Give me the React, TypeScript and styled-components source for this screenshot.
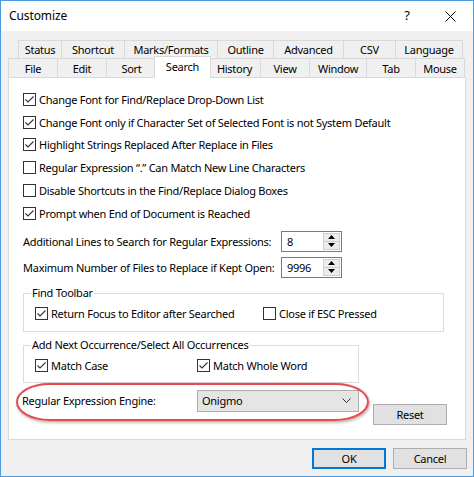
import React from "react";
import styled, { createGlobalStyle } from "styled-components";

const GlobalStyle = createGlobalStyle`
  html, body {
    margin: 0;
    padding: 0;
    background: #ffffff;
  }
  body {
    font-family: "Noto Sans", "Segoe UI", sans-serif;
    font-size: 11px;
    letter-spacing: -0.26px;
    color: #000000;
  }
`;

// tab dividers measured from the dialog
const backTabs = [
  { name: "Status", w: 44 },
  { name: "Shortcut", w: 64 },
  { name: "Marks/Formats", w: 94 },
  { name: "Outline", w: 57 },
  { name: "Advanced", w: 71 },
  { name: "CSV", w: 53 },
  { name: "Language", w: 68 },
];

const frontTabs = [
  { name: "File", w: 50 },
  { name: "Edit", w: 50 },
  { name: "Sort", w: 51 },
  { name: "Search", w: 57, active: true },
  { name: "History", w: 53 },
  { name: "View", w: 50 },
  { name: "Window", w: 58 },
  { name: "Tab", w: 50 },
  { name: "Mouse", w: 50 },
];

const options = [
  { label: "Change Font for Find/Replace Drop-Down List", checked: true },
  { label: "Change Font only if Character Set of Selected Font is not System Default", checked: true },
  { label: "Highlight Strings Replaced After Replace in Files", checked: true },
  { label: "Regular Expression \u201C.\u201D Can Match New Line Characters", checked: false },
  { label: "Disable Shortcuts in the Find/Replace Dialog Boxes", checked: false },
  { label: "Prompt when End of Document is Reached", checked: true },
];

const Window = styled.div`
  width: 474px;
  height: 477px;
  box-sizing: border-box;
  border: 1px solid #4c9be2;
  background: #f0f0f0;
  display: flex;
  flex-direction: column;
  overflow: hidden;
`;

const TitleBar = styled.div`
  height: 30px;
  background: #ffffff;
  display: flex;
  align-items: center;
  padding-left: 8px;
  flex-shrink: 0;
`;

const Title = styled.div`
  flex: 1;
  font-size: 12px;
  letter-spacing: -0.1px;
  padding-bottom: 1px;
`;

const HelpButton = styled.div`
  width: 30px;
  text-align: center;
  font-size: 13px;
  padding-bottom: 2px;
`;

const CloseButton = styled.div`
  width: 45px;
  height: 30px;
  margin-left: 6px;
  display: flex;
  align-items: center;
  justify-content: center;
`;

const Body = styled.div`
  padding: 9px 6px 0 7px;
  display: flex;
  flex-direction: column;
`;

const BackRow = styled.div`
  display: flex;
  height: 18px;
  padding-left: 10px;
`;

const FrontRow = styled.div`
  display: flex;
  height: 19px;
  align-items: flex-end;
`;

const Tab = styled.div<{ $w: number; $active?: boolean }>`
  width: ${(p) => p.$w}px;
  height: ${(p) => (p.$active ? "22px" : "100%")};
  box-sizing: border-box;
  border: 1px solid #d9d9d9;
  border-bottom: none;
  background: ${(p) => (p.$active ? "#ffffff" : "#f0f0f0")};
  display: flex;
  align-items: center;
  justify-content: center;
  white-space: nowrap;
  margin-left: ${(p) => (p.$active ? "-3px" : "-1px")};
  margin-right: ${(p) => (p.$active ? "-2px" : "0")};
  margin-bottom: ${(p) => (p.$active ? "-1px" : "0")};
  padding-bottom: ${(p) => (p.$active ? "2px" : "0")};
  position: ${(p) => (p.$active ? "relative" : "static")};
  z-index: ${(p) => (p.$active ? 2 : "auto")};

  &:first-child {
    margin-left: 0;
  }
`;

const Panel = styled.div`
  width: 458px;
  height: 363px;
  box-sizing: border-box;
  border: 1px solid #d9d9d9;
  background: #ffffff;
  padding: 10px 0 0 14px;
  display: flex;
  flex-direction: column;
`;

const CheckRow = styled.label`
  display: flex;
  align-items: center;
  gap: 3px;
  height: 22.8px;
  white-space: nowrap;
`;

const InlineCheck = styled.label<{ $w?: number }>`
  display: flex;
  align-items: center;
  gap: 3px;
  white-space: nowrap;
  width: ${(p) => (p.$w ? `${p.$w}px` : "auto")};
  flex-shrink: 0;
`;

const Box = styled.span`
  width: 13px;
  height: 13px;
  box-sizing: border-box;
  border: 1px solid #333333;
  background: #ffffff;
  display: flex;
  align-items: center;
  justify-content: center;
  flex-shrink: 0;
`;

const SpinRow = styled.div<{ $top: number }>`
  display: flex;
  align-items: center;
  height: 21px;
  margin-top: ${(p) => p.$top}px;
`;

const SpinLabel = styled.div`
  width: 258px;
  white-space: nowrap;
`;

const SpinBox = styled.div`
  width: 61px;
  height: 21px;
  box-sizing: border-box;
  border: 1px solid #7a7a7a;
  display: flex;
  background: #ffffff;
`;

const SpinValue = styled.div`
  flex: 1;
  padding-left: 5px;
  display: flex;
  align-items: center;
`;

const SpinButtons = styled.div`
  width: 17px;
  margin: 1px 1px 1px 0;
  display: flex;
  flex-direction: column;
`;

const SpinButton = styled.div`
  flex: 1;
  box-sizing: border-box;
  border: 1px solid #cfcfcf;
  background: #ececec;
  display: flex;
  align-items: center;
  justify-content: center;

  & + & {
    border-top: none;
  }
`;

const Group = styled.div<{ $w: number; $h: number; $top: number }>`
  position: relative;
  width: ${(p) => p.$w}px;
  height: ${(p) => p.$h}px;
  margin-top: ${(p) => p.$top}px;
  box-sizing: border-box;
  border: 1px solid #dcdcdc;
  padding: 12px 0 0 11px;
  display: flex;
  align-items: flex-start;
`;

const Caption = styled.span`
  position: absolute;
  top: -9px;
  left: 7px;
  padding: 0 1px;
  background: #ffffff;
  line-height: 16px;
  white-space: nowrap;
`;

const EngineRow = styled.div`
  position: relative;
  display: flex;
  align-items: flex-start;
  margin: 7px 0 0 -1px;
`;

const EngineLabel = styled.div`
  width: 175px;
  line-height: 22px;
  white-space: nowrap;
`;

const Combo = styled.div`
  width: 162px;
  height: 22px;
  box-sizing: border-box;
  border: 1px solid #adadad;
  background: #e5e5e5;
  display: flex;
  align-items: center;
  justify-content: space-between;
  padding: 0 7px 0 4px;
`;

const Button = styled.div<{ $default?: boolean; $top?: number; $left?: number }>`
  width: 74px;
  height: 21px;
  box-sizing: border-box;
  border: 1px solid ${(p) => (p.$default ? "#0078d7" : "#adadad")};
  box-shadow: ${(p) => (p.$default ? "inset 0 0 0 1px #0078d7" : "none")};
  background: #e1e1e1;
  display: flex;
  align-items: center;
  justify-content: center;
  margin-top: ${(p) => p.$top ?? 0}px;
  margin-left: ${(p) => p.$left ?? 0}px;
`;

const Highlight = styled.div`
  position: absolute;
  left: -6px;
  top: -7px;
  width: 353px;
  height: 38px;
  box-sizing: border-box;
  border: 2px solid #e34b50;
  border-radius: 34px / 19px;
  box-shadow: 0 0 1px #e34b50, 1px 2px 3px rgba(0, 0, 0, 0.25);
  pointer-events: none;
`;

const Footer = styled.div`
  display: flex;
  justify-content: flex-end;
  gap: 7px;
  margin-top: 8px;
`;

function Check({ checked }: { checked: boolean }) {
  return (
    <Box>
      {checked && (
        <svg width="11" height="11" viewBox="0 0 11 11">
          <polyline points="1.5,5.5 4,8 9.5,2.5" fill="none" stroke="#333" strokeWidth="1.1" />
        </svg>
      )}
    </Box>
  );
}

function Spin({ value }: { value: string }) {
  return (
    <SpinBox>
      <SpinValue>{value}</SpinValue>
      <SpinButtons>
        <SpinButton>
          <svg width="7" height="4" viewBox="0 0 7 4">
            <polygon points="0,4 7,4 3.5,0" fill="#000" />
          </svg>
        </SpinButton>
        <SpinButton>
          <svg width="7" height="4" viewBox="0 0 7 4">
            <polygon points="0,0 7,0 3.5,4" fill="#000" />
          </svg>
        </SpinButton>
      </SpinButtons>
    </SpinBox>
  );
}

export default function App() {
  return (
    <>
      <GlobalStyle />
      <Window>
        <TitleBar>
          <Title>Customize</Title>
          <HelpButton>?</HelpButton>
          <CloseButton>
            <svg width="11" height="11" viewBox="0 0 11 11">
              <path d="M0.5 0.5 L10.5 10.5 M10.5 0.5 L0.5 10.5" stroke="#000" strokeWidth="1" />
            </svg>
          </CloseButton>
        </TitleBar>
        <Body>
          <BackRow>
            {backTabs.map((t) => (
              <Tab key={t.name} $w={t.w}>
                {t.name}
              </Tab>
            ))}
          </BackRow>
          <FrontRow>
            {frontTabs.map((t) => (
              <Tab key={t.name} $w={t.w} $active={t.active}>
                {t.name}
              </Tab>
            ))}
          </FrontRow>
          <Panel>
            {options.map((o) => (
              <CheckRow key={o.label}>
                <Check checked={o.checked} />
                {o.label}
              </CheckRow>
            ))}
            <SpinRow $top={6}>
              <SpinLabel>Additional Lines to Search for Regular Expressions:</SpinLabel>
              <Spin value="8" />
            </SpinRow>
            <SpinRow $top={5}>
              <SpinLabel>Maximum Number of Files to Replace if Kept Open:</SpinLabel>
              <Spin value="9996" />
            </SpinRow>
            <Group $w={421} $h={39} $top={15}>
              <Caption>Find Toolbar</Caption>
              <InlineCheck $w={228}>
                <Check checked />
                Return Focus to Editor after Searched
              </InlineCheck>
              <InlineCheck>
                <Check checked={false} />
                Close if ESC Pressed
              </InlineCheck>
            </Group>
            <Group $w={336} $h={38} $top={13}>
              <Caption>Add Next Occurrence/Select All Occurrences</Caption>
              <InlineCheck $w={162}>
                <Check checked />
                Match Case
              </InlineCheck>
              <InlineCheck>
                <Check checked />
                Match Whole Word
              </InlineCheck>
            </Group>
            <EngineRow>
              <Highlight />
              <EngineLabel>Regular Expression Engine:</EngineLabel>
              <Combo>
                <span>Onigmo</span>
                <svg width="9" height="5" viewBox="0 0 9 5">
                  <polyline points="0.5,0.5 4.5,4.5 8.5,0.5" fill="none" stroke="#333" strokeWidth="1" />
                </svg>
              </Combo>
              <Button $top={14} $left={14}>
                Reset
              </Button>
            </EngineRow>
          </Panel>
          <Footer>
            <Button $default>OK</Button>
            <Button>Cancel</Button>
          </Footer>
        </Body>
      </Window>
    </>
  );
}
